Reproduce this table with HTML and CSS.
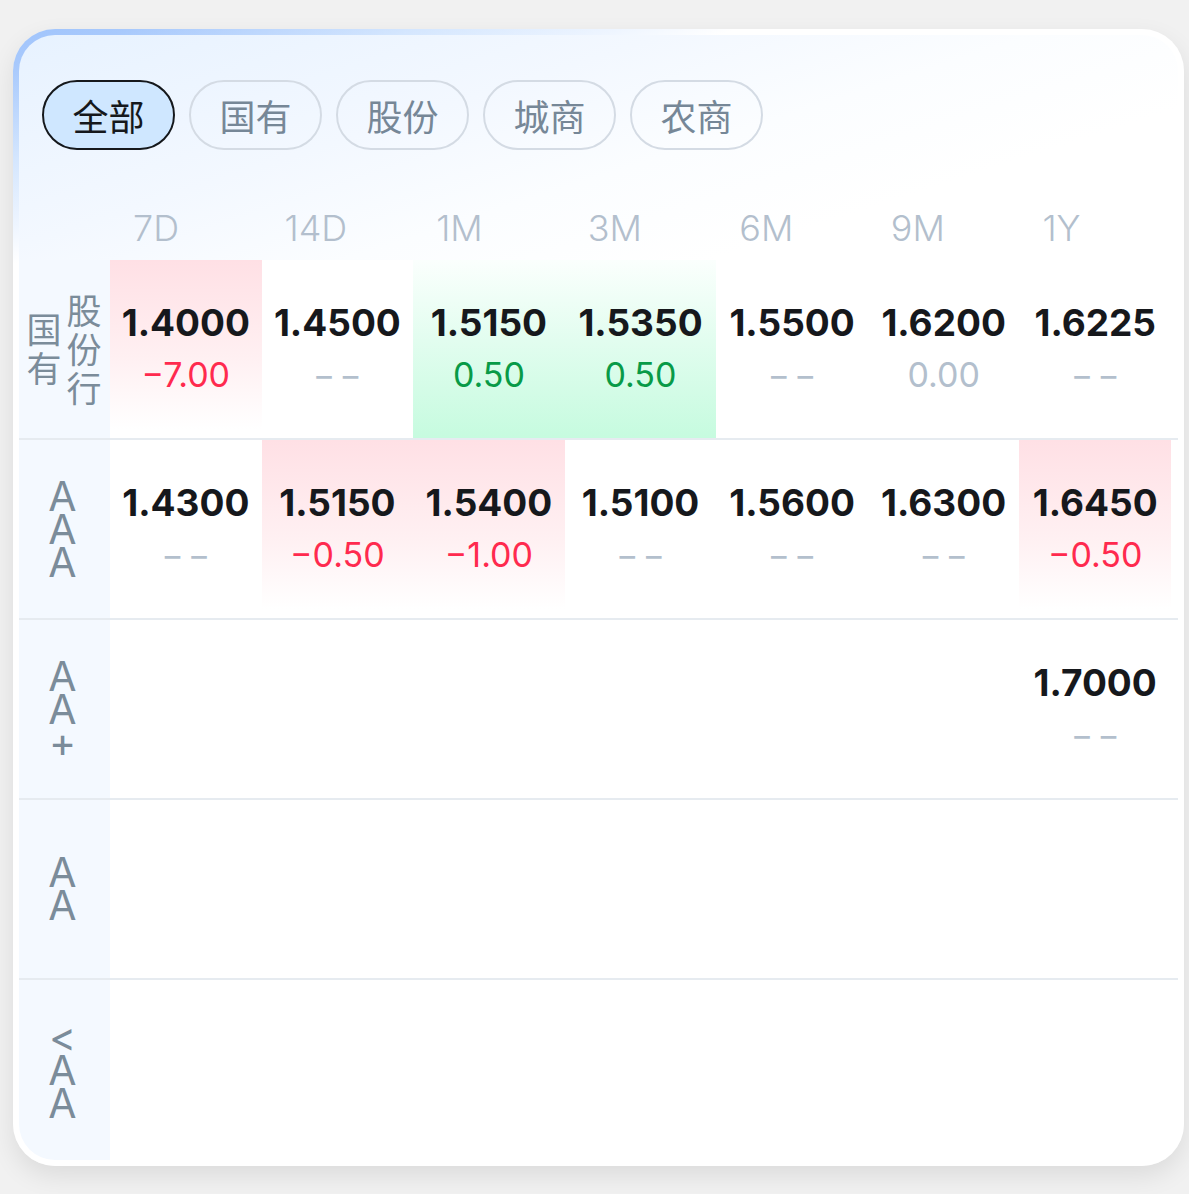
FILE: index.html
```html
<!DOCTYPE html>
<html lang="zh-CN">
<head>
<meta charset="utf-8">
<title>利率</title>
<link rel="stylesheet" href="styles.css">
</head>
<body>
<div class="card">
  <div class="inner">
    <div class="tabs">
      <div class="tab active">全部</div>
      <div class="tab">国有</div>
      <div class="tab">股份</div>
      <div class="tab">城商</div>
      <div class="tab">农商</div>
    </div>
    <div class="table">
      <div class="row head">
        <div class="hcell"></div>
        <div class="hcell">7D</div>
        <div class="hcell">14D</div>
        <div class="hcell">1M</div>
        <div class="hcell">3M</div>
        <div class="hcell">6M</div>
        <div class="hcell">9M</div>
        <div class="hcell">1Y</div>
      </div>

      <div class="row">
        <div class="lab"><span class="vt">国有<br>股份行</span></div>
        <div class="cell up"><span class="v">1.4000</span><span class="d red">−7.00</span></div>
        <div class="cell"><span class="v">1.4500</span><span class="d none">−−</span></div>
        <div class="cell down"><span class="v">1.5150</span><span class="d green">0.50</span></div>
        <div class="cell down"><span class="v">1.5350</span><span class="d green">0.50</span></div>
        <div class="cell"><span class="v">1.5500</span><span class="d none">−−</span></div>
        <div class="cell"><span class="v">1.6200</span><span class="d gray">0.00</span></div>
        <div class="cell"><span class="v">1.6225</span><span class="d none">−−</span></div>
      </div>

      <div class="row">
        <div class="lab"><span class="st">AAA</span></div>
        <div class="cell"><span class="v">1.4300</span><span class="d none">−−</span></div>
        <div class="cell up"><span class="v">1.5150</span><span class="d red">−0.50</span></div>
        <div class="cell up"><span class="v">1.5400</span><span class="d red">−1.00</span></div>
        <div class="cell"><span class="v">1.5100</span><span class="d none">−−</span></div>
        <div class="cell"><span class="v">1.5600</span><span class="d none">−−</span></div>
        <div class="cell"><span class="v">1.6300</span><span class="d none">−−</span></div>
        <div class="cell up"><span class="v">1.6450</span><span class="d red">−0.50</span></div>
      </div>

      <div class="row">
        <div class="lab"><span class="st">AA+</span></div>
        <div class="cell"></div>
        <div class="cell"></div>
        <div class="cell"></div>
        <div class="cell"></div>
        <div class="cell"></div>
        <div class="cell"></div>
        <div class="cell"><span class="v">1.7000</span><span class="d none">−−</span></div>
      </div>

      <div class="row">
        <div class="lab"><span class="st">AA</span></div>
        <div class="cell"></div>
        <div class="cell"></div>
        <div class="cell"></div>
        <div class="cell"></div>
        <div class="cell"></div>
        <div class="cell"></div>
        <div class="cell"></div>
      </div>

      <div class="row last">
        <div class="lab"><span class="st">&lt;AA</span></div>
        <div class="cell"></div>
        <div class="cell"></div>
        <div class="cell"></div>
        <div class="cell"></div>
        <div class="cell"></div>
        <div class="cell"></div>
        <div class="cell"></div>
      </div>
    </div>
  </div>
</div>
</body>
</html>
```

FILE: styles.css
```css
* { box-sizing: border-box; }

html, body {
  margin: 0;
  padding: 0;
}

body {
  background: #f1f1f1;
  font-family: Inter, "Noto Sans", "Noto Sans CJK SC", sans-serif;
  width: 1189px;
  height: 1194px;
  overflow: hidden;
}

.card {
  margin: 29px 0 0 13px;
  width: 1171px;
  height: 1137px;
  padding: 6px;
  border-radius: 42px;
  background: linear-gradient(162deg, #a0c4fc 0%, #a8c9fc 2.5%, #d4e6fe 8.6%, #eef5ff 13%, #ffffff 15.5%);
  box-shadow: 0 10px 26px rgba(0, 0, 0, 0.09);
}

.inner {
  height: 100%;
  border-radius: 36px;
  overflow: hidden;
  background: linear-gradient(162deg, #e7f2ff 0%, #f3f8ff 14%, #fbfdff 22%, #ffffff 30%);
}

.tabs {
  display: flex;
  gap: 14px;
  padding: 45px 0 0 23px;
}

.tab {
  width: 133px;
  height: 70px;
  border: 2px solid #d4dbe4;
  border-radius: 35px;
  display: flex;
  align-items: center;
  justify-content: center;
  font-family: "Noto Sans CJK SC", sans-serif;
  font-size: 36px;
  color: #768797;
  padding-bottom: 1px;
}

.tab.active {
  background: #cfe7ff;
  border: 2.5px solid #15181c;
  color: #15181c;
}

.table {
  margin-top: 40px;
}

.row {
  display: grid;
  grid-template-columns: 91px repeat(7, 1fr);
  padding-right: 7px;
  height: 180px;
  border-bottom: 2px solid #e6ebf0;
}

.row.last {
  border-bottom: none;
}

.row.head {
  height: 70px;
  border-bottom: none;
}

.hcell {
  display: flex;
  align-items: center;
  padding-left: 23px;
  padding-top: 6px;
  font-size: 36px;
  font-weight: 300;
  color: #b3bfcd;
}

.lab {
  background: #f4f9ff;
  display: flex;
  align-items: center;
  justify-content: center;
  color: #7b8c9a;
}

.vt {
  writing-mode: vertical-lr;
  text-align: center;
  font-family: "Noto Sans CJK SC", sans-serif;
  font-size: 35px;
  line-height: 40px;
  letter-spacing: 4px;
  margin-right: 2px;
  margin-top: 4px;
}

.st {
  display: block;
  width: 32px;
  word-break: break-all;
  text-align: center;
  font-family: Inter, sans-serif;
  font-size: 41px;
  line-height: 33px;
  margin-right: 4px;
}

.cell {
  display: flex;
  flex-direction: column;
  align-items: center;
  justify-content: center;
  background: #ffffff;
}

.cell.up {
  background: linear-gradient(180deg, #ffe0e5 0%, #fff0f2 55%, #ffffff 95%);
}

.cell.down {
  background: linear-gradient(180deg, #fbfffd 0%, #e2fdef 45%, #c6fbdf 100%);
}

.v {
  font-size: 37px;
  font-weight: 700;
  line-height: 52px;
  color: #16181c;
}

.d {
  font-size: 34px;
  font-weight: 400;
  line-height: 52px;
}

.red { color: #ff2a4e; }
.green { color: #089a47; }
.gray { color: #b3bfcd; }
.none { color: #b3bfcd; letter-spacing: 4px; margin-right: -4px; }
```
